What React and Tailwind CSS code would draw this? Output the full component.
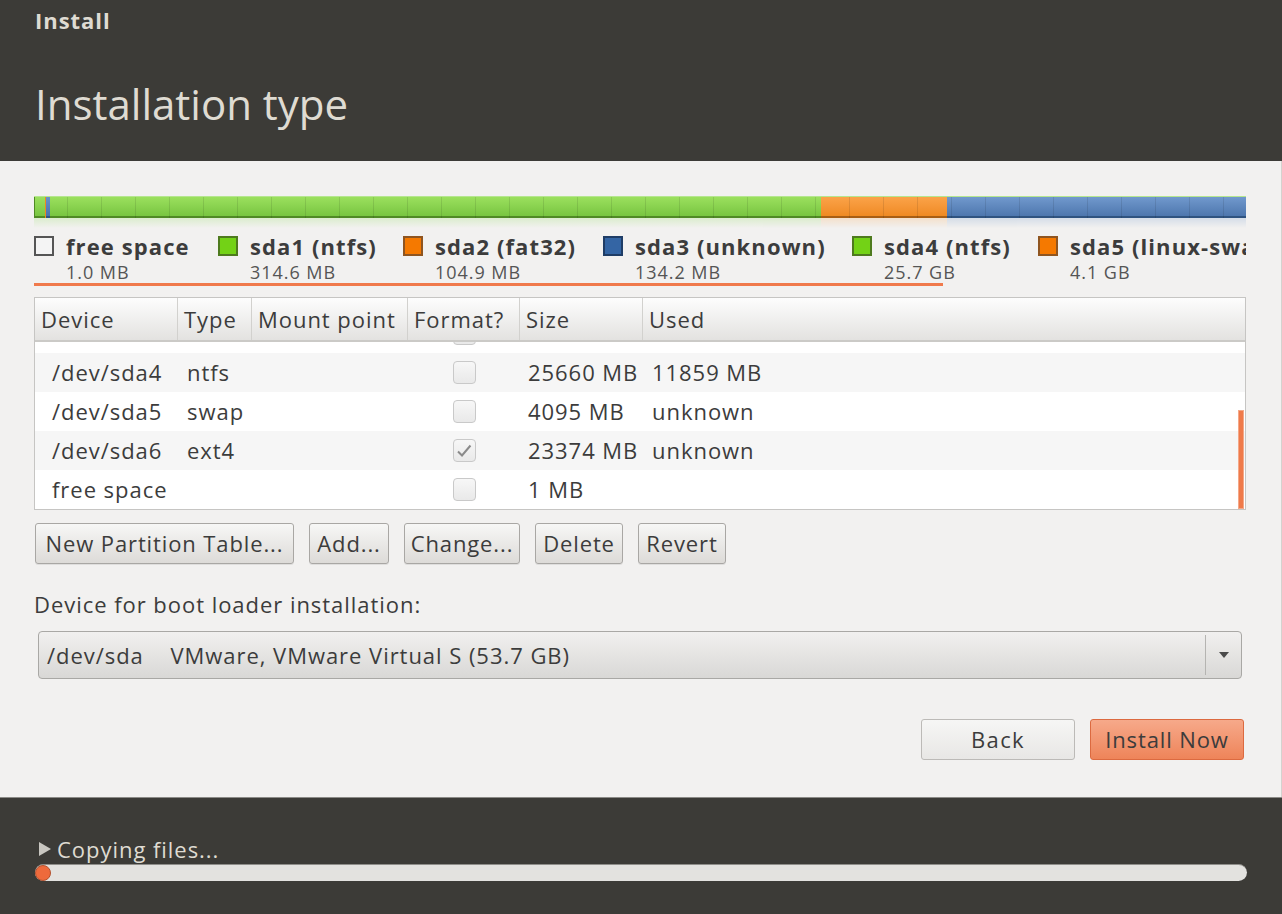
import React from "react";

const FONT = { fontFamily: '"Open Sans", "Noto Sans", sans-serif' };

// legend entries under the partition bar (widths keep the squares where the installer puts them)
const LEGEND = [
  { name: "free space", size: "1.0 MB", box: "bg-[#f4f4f4] border-[#555]", w: "w-[184px]" },
  { name: "sda1 (ntfs)", size: "314.6 MB", box: "bg-[#73d216] border-[#4e7a1e]", w: "w-[185px]" },
  { name: "sda2 (fat32)", size: "104.9 MB", box: "bg-[#f57900] border-[#8f5520]", w: "w-[200px]" },
  { name: "sda3 (unknown)", size: "134.2 MB", box: "bg-[#3465a4] border-[#1f3d66]", w: "w-[249px]" },
  { name: "sda4 (ntfs)", size: "25.7 GB", box: "bg-[#73d216] border-[#4e7a1e]", w: "w-[186px]" },
  { name: "sda5 (linux-swap)", size: "4.1 GB", box: "bg-[#f57900] border-[#8f5520]", w: "w-[260px]" },
];

const ROWS = [
  { dev: "/dev/sda4", type: "ntfs", checked: false, size: "25660 MB", used: "11859 MB", bg: "bg-[#f6f6f6]" },
  { dev: "/dev/sda5", type: "swap", checked: false, size: "4095 MB", used: "unknown", bg: "bg-white" },
  { dev: "/dev/sda6", type: "ext4", checked: true, size: "23374 MB", used: "unknown", bg: "bg-[#f6f6f6]" },
  { dev: "free space", type: "", checked: false, size: "1 MB", used: "", bg: "bg-white" },
];

const COLS = "grid grid-cols-[143px_74px_156px_112px_123px_1fr]";

function Check({ checked }) {
  return (
    <div className="w-[23px] h-[23px] rounded-[4px] border border-[#c9c9c9] bg-linear-to-b from-[#f7f7f7] to-[#e9e9e9] flex items-center justify-center">
      {checked && (
        <svg width="18" height="18" viewBox="0 0 18 18">
          <path d="M3 9.5 L7 13.5 L15.5 3.5" fill="none" stroke="#8a8a8a" strokeWidth="2" />
        </svg>
      )}
    </div>
  );
}

function Row({ r }) {
  return (
    <div className={`${COLS} h-[39px] ${r.bg} items-center text-[22px] text-[#3c3c3c]`}>
      <div className="pl-[17px] whitespace-nowrap">{r.dev}</div>
      <div className="pl-[9px]">{r.type}</div>
      <div />
      <div className="flex justify-center">
        <Check checked={r.checked} />
      </div>
      <div className="pl-[8px] whitespace-nowrap">{r.size}</div>
      <div className="pl-[9px]">{r.used}</div>
    </div>
  );
}

function Btn({ children, w }) {
  return (
    <button className={`${w} h-[41px] rounded-[3px] border border-[#a9a7a4] bg-linear-to-b from-[#f7f7f6] to-[#dddbd8] text-[22px] tracking-[0.04em] text-[#3c3c3c] shadow-[0_1px_0_rgba(0,0,0,0.08)] whitespace-nowrap`}>
      {children}
    </button>
  );
}

function Seg({ w, top, bot, line }) {
  return (
    <div
      className={`h-full bg-linear-to-b ${top} ${bot} border-b-2 ${line}`}
      style={{ width: w }}
    />
  );
}

export default function App() {
  return (
    <div className="w-[1282px] h-[914px] flex flex-col bg-[#f2f1f0] overflow-hidden tracking-[0.06em]" style={FONT}>
      {/* header */}
      <div className="h-[161px] shrink-0 bg-[#3c3b37] px-[35px] pt-[7px] text-[#dfdbd2]">
        <div className="text-[22px] font-bold leading-[26px]">Install</div>
        <div className="mt-[46px] text-[42px] leading-[50px] tracking-normal">Installation type</div>
      </div>

      {/* main */}
      <div className="flex-1 flex flex-col pl-[34px] pr-[35px] pt-[35px] border-r border-[#d4d2cf]">
        {/* partition bar */}
        <div className="relative h-[22px] flex border-t border-[#b5e68e]">
          <div className="w-[11px] h-full bg-linear-to-b from-[#9be05e] to-[#78c540] border-b-2 border-[#4f8a24] border-l border-l-[#4f8a24]" />
          <div className="w-[1px] h-full bg-[#f08a1c]" />
          <div className="w-[4px] h-full bg-linear-to-b from-[#6a93c9] to-[#4a72aa] border-b-2 border-[#2f5380]" />
          <Seg w={772} top="from-[#9be05e]" bot="to-[#78c540]" line="border-[#4f8a24]" />
          <Seg w={126} top="from-[#fba348]" bot="to-[#ef8a22]" line="border-[#a85e14]" />
          <Seg w={299} top="from-[#7199cd]" bot="to-[#4e77ae]" line="border-[#2f5380]" />
          <div className="absolute inset-0 bg-[repeating-linear-gradient(90deg,transparent_0,transparent_33px,rgba(0,0,0,0.10)_33px,rgba(0,0,0,0.10)_34px)]" />
        </div>
        <div className="h-[10px] flex opacity-40">
          <div className="w-[788px] bg-linear-to-b from-[#b9e69a] to-transparent" />
          <div className="w-[126px] bg-linear-to-b from-[#f7c896] to-transparent" />
          <div className="w-[299px] bg-linear-to-b from-[#a9bfdc] to-transparent" />
        </div>

        {/* legend, clipped at the right edge like the installer does */}
        <div className="mt-[1px] pt-[4px] h-[60px] flex overflow-hidden whitespace-nowrap">
          {LEGEND.map((l) => (
            <div key={l.name} className={`flex gap-[12px] shrink-0 ${l.w}`}>
              <div className={`mt-[3px] w-[20px] h-[20px] border-2 shrink-0 ${l.box}`} />
              <div className="flex flex-col">
                <div className="text-[22px] font-bold leading-[26px] tracking-[0.05em] text-[#3c3c3c]">{l.name}</div>
                <div className="mt-[2px] text-[18px] leading-[22px] text-[#555]">{l.size}</div>
              </div>
            </div>
          ))}
        </div>
        <div className="w-[909px] h-[3px] bg-[#f07a4c] -mt-[6px]" />

        {/* partition table */}
        <div className="relative mt-[11px] border border-[#c6c5c3] bg-white">
          <div className={`${COLS} h-[44px] border-b-2 border-[#cbcac7] bg-linear-to-b from-[#fdfdfd] to-[#e3e2e0] text-[22px] text-[#3c3c3c]`}>
            {["Device", "Type", "Mount point", "Format?", "Size", "Used"].map((c, i) => (
              <div
                key={c}
                className={`flex items-center pl-[6px] whitespace-nowrap overflow-hidden ${i < 5 ? "border-r border-[#d2d1ce]" : ""}`}
              >
                {c}
              </div>
            ))}
          </div>
          {/* row scrolled mostly out of view */}
          <div className="h-[11px] overflow-hidden bg-white">
            <div className="-mt-[28px]">
              <Row r={{ dev: "/dev/sda3", type: "", checked: false, size: "", used: "", bg: "bg-white" }} />
            </div>
          </div>
          {ROWS.map((r) => (
            <Row key={r.dev} r={r} />
          ))}
          <div className="absolute right-[1px] bottom-0 w-[6px] h-[99px] bg-[#ef7a4a] border border-[#f4a888]" />
        </div>

        {/* action buttons */}
        <div className="mt-[13px] flex gap-[15px] pl-[1px]">
          <Btn w="w-[259px]">New Partition Table...</Btn>
          <Btn w="w-[80px]">Add...</Btn>
          <Btn w="w-[116px]">Change...</Btn>
          <Btn w="w-[88px]">Delete</Btn>
          <Btn w="w-[88px]">Revert</Btn>
        </div>

        <div className="mt-[27px] text-[22px] leading-[26px] text-[#3c3c3c]">
          Device for boot loader installation:
        </div>

        {/* boot loader combo */}
        <div className="mt-[14px] mx-[4px] h-[48px] flex items-center rounded-[4px] border border-[#a9a8a5] bg-linear-to-b from-[#f1f0ef] to-[#d9d8d6] text-[22px] text-[#3c3c3c]">
          <div className="flex-1 pl-[8px] whitespace-pre">/dev/sda    VMware, VMware Virtual S (53.7 GB)</div>
          <div className="w-[1px] h-[40px] bg-[#b5b4b1]" />
          <div className="w-[35px] flex justify-center">
            <svg width="12" height="8" viewBox="0 0 12 8">
              <path d="M1 1 L11 1 L6 7 Z" fill="#4a4a4a" />
            </svg>
          </div>
        </div>

        {/* navigation */}
        <div className="mt-[40px] flex justify-end gap-[15px] pr-[2px]">
          <button className="w-[154px] h-[41px] rounded-[3px] border border-[#bcbab7] bg-linear-to-b from-[#f6f6f5] to-[#e8e7e5] text-[22px] tracking-[0.06em] text-[#3c3c3c]">
            Back
          </button>
          <button className="w-[154px] h-[41px] rounded-[3px] border border-[#dc6a40] bg-linear-to-b from-[#f6a98a] to-[#ee8459] text-[22px] tracking-[0.04em] text-[#3c3c3c] whitespace-nowrap">
            Install Now
          </button>
        </div>
      </div>

      {/* footer / progress */}
      <div className="h-[117px] shrink-0 bg-[#3c3b37] border-t border-[#8c8b87] px-[35px] pt-[38px]">
        <div className="flex items-center gap-[5px] h-[26px] text-[22px] text-[#dfdbd2]">
          <svg width="14" height="16" viewBox="0 0 14 16" className="ml-[3px]">
            <path d="M1 1 L13 8 L1 15 Z" fill="#c9c7c1" />
          </svg>
          <span>Copying files...</span>
        </div>
        <div className="mt-[2px] h-[17px] rounded-full bg-[#e3e2df] border-t border-[#8f8e8a] flex items-center">
          <div className="w-[16px] h-[16px] rounded-full bg-[#ee6a3c] border border-[#b3512e]" />
        </div>
      </div>
    </div>
  );
}
